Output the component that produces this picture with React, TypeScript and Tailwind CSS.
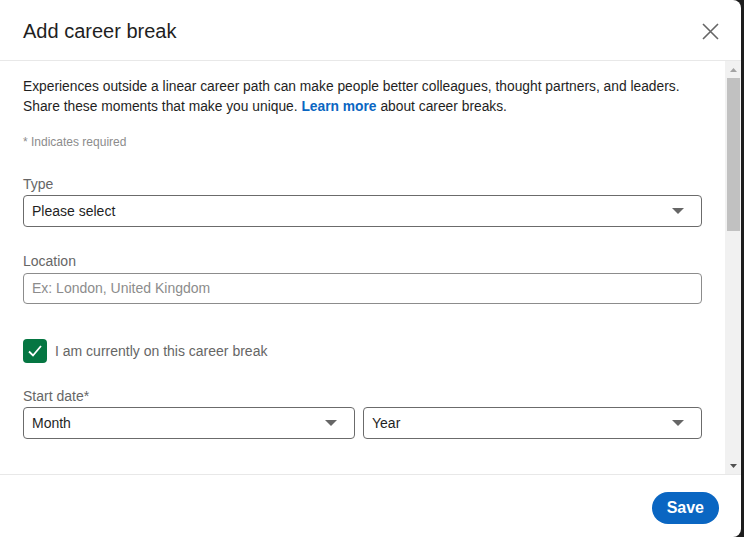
import React from 'react'

const font = { fontFamily: '"Segoe UI", "Liberation Sans", Arial, sans-serif' }

function Caret() {
  return (
    <svg width="12" height="6" viewBox="0 0 12 6" className="shrink-0">
      <path d="M0 0h12L6 6z" fill="#666666" />
    </svg>
  )
}

function SelectBox({ value, className = '' }: { value: string; className?: string }) {
  return (
    <div
      className={`h-[32px] flex items-center justify-between pl-[8px] pr-[17px] border border-[#6b6b6b] rounded-[4px] text-[14px] text-[#1f1f1f] ${className}`}
    >
      <span>{value}</span>
      <Caret />
    </div>
  )
}

function Label({ children }: { children: React.ReactNode }) {
  return <div className="text-[14px] leading-[20px] text-[#666666]">{children}</div>
}

export default function App() {
  return (
    <div className="w-[744px] h-[537px] bg-[#1c1c1c] overflow-hidden" style={font}>
      <div className="w-[741px] h-[537px] bg-white rounded-r-[8px] flex flex-col">
        {/* header */}
        <div className="h-[61px] shrink-0 flex items-center justify-between pl-[23px] pr-[22px] pt-[2px] border-b border-[#e8e8e8]">
          <h2 className="text-[20px] text-[#1f1f1f] font-normal">Add career break</h2>
          <svg width="17" height="17" viewBox="0 0 17 17">
            <path d="M1 1L16 16M16 1L1 16" stroke="#666666" strokeWidth="1.6" />
          </svg>
        </div>

        {/* body */}
        <div className="flex-1 flex min-h-0">
          <div className="flex-1 pl-[23px] pr-[23px] pt-[16px]">
            <p className="text-[13.8px] leading-[20px] text-[#1f1f1f]">
              Experiences outside a linear career path can make people better colleagues, thought partners, and leaders.
              <br />
              Share these moments that make you unique. <span className="text-[#0a66c2] font-semibold">Learn more</span>{' '}
              about career breaks.
            </p>
            <div className="mt-[17px] text-[12px] leading-[16px] text-[#8c8c8c]">* Indicates required</div>

            <div className="mt-[24px]">
              <Label>Type</Label>
              <SelectBox value="Please select" className="mt-[1px]" />
            </div>

            <div className="mt-[24px]">
              <Label>Location</Label>
              <div className="mt-[2px] h-[31px] flex items-center px-[8px] border border-[#8c8c8c] rounded-[4px] text-[14px] text-[#8c8c8c]">
                Ex: London, United Kingdom
              </div>
            </div>

            <div className="mt-[35px] flex items-center gap-[8px]">
              <div className="w-[24px] h-[24px] rounded-[4px] bg-[#057642] flex items-center justify-center">
                <svg width="16" height="14" viewBox="0 0 16 14">
                  <path d="M2 7.5L6 11.5L14 2" stroke="white" strokeWidth="1.8" fill="none" />
                </svg>
              </div>
              <span className="text-[14px] text-[#666666]">I am currently on this career break</span>
            </div>

            <div className="mt-[23px]">
              <Label>Start date*</Label>
              <div className="mt-[1px] flex gap-[8px]">
                <SelectBox value="Month" className="w-[332px]" />
                <SelectBox value="Year" className="flex-1" />
              </div>
            </div>
          </div>

          {/* scrollbar */}
          <div className="w-[16px] bg-[#f1f1f1] flex flex-col items-center">
            <div className="h-[17px] flex items-center justify-center">
              <svg width="7" height="4" viewBox="0 0 7 4">
                <path d="M0 4h7L3.5 0z" fill="#a3a3a3" />
              </svg>
            </div>
            <div className="w-[13px] h-[153px] bg-[#c1c1c1]" />
            <div className="flex-1" />
            <div className="h-[17px] flex items-center justify-center">
              <svg width="7" height="4" viewBox="0 0 7 4">
                <path d="M0 0h7L3.5 4z" fill="#505050" />
              </svg>
            </div>
          </div>
        </div>

        {/* footer */}
        <div className="h-[63px] shrink-0 border-t border-[#e8e8e8] flex items-center justify-end pr-[22px] pt-[3px]">
          <button className="h-[32px] px-[15px] rounded-full bg-[#0a66c2] text-white text-[16px] font-semibold">
            Save
          </button>
        </div>
      </div>
    </div>
  )
}
